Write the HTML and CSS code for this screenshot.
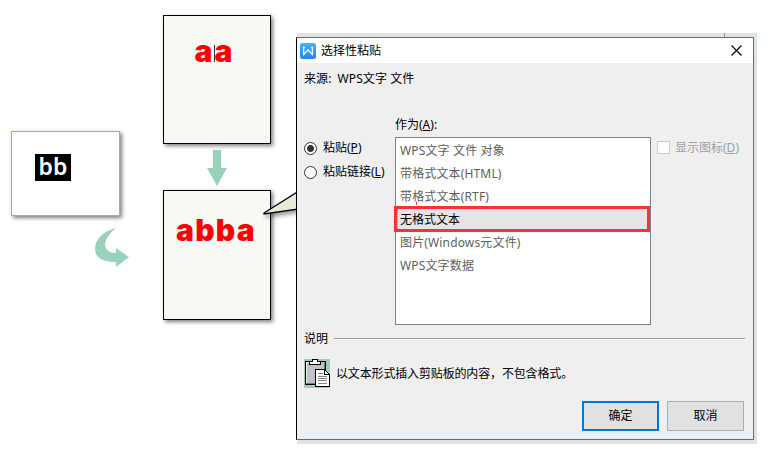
FILE: index.html
```
<!DOCTYPE html>
<html lang="zh-CN">
<head>
<meta charset="utf-8">
<title>选择性粘贴</title>
<link rel="stylesheet" href="styles.css">
</head>
<body>
<main class="canvas">
  <section class="page clip"><span class="selected-text">bb</span></section>
  <section class="page doc before"><span class="red">a</span><i class="caret"></i><span class="red">a</span></section>
  <section class="page doc after"><span class="red wide">abba</span></section>
  <svg class="arrow-down" width="20" height="36" viewBox="0 0 20 36"><path d="M6 0h8v18h6L10 36 0 18h6z" fill="#98d2ba"/></svg>
  <svg class="arrow-curve" width="34" height="40" viewBox="0 0 34 40"><path d="M21 0C8 3 0 12 0 21c0 9 8 13 21 13v5l13-10-13-9v5C7 25 6 12 21 0z" fill="#98d2ba"/></svg>
  <svg class="callout" width="40" height="28" viewBox="0 0 40 28"><path d="M3 24 L38 2 V20 L3 25z" fill="#ece9d8" stroke="#000" stroke-width="1.3"/></svg>
  <div class="backdrop"></div>
  <section class="dialog">
    <header class="titlebar">
      <svg class="logo" width="16" height="16" viewBox="0 0 16 16"><defs><linearGradient id="g" x2="0" y2="1"><stop stop-color="#3fb5ff"/><stop offset="1" stop-color="#2684f4"/></linearGradient></defs><rect width="16" height="16" rx="2.5" fill="url(#g)"/><path d="M3 4.300h1.800M3.700 4.500v7.100L8 7l4.300 4.600V4.500M11.200 4.300H13" fill="none" stroke="#fff" stroke-width="1.2"/></svg>
      <h1>选择性粘贴</h1>
      <svg class="close" width="11" height="11" viewBox="0 0 11 11"><path d="M.5.5l10 10m0-10l-10 10" stroke="#000" stroke-width="1.15"/></svg>
    </header>
    <div class="source"><span>来源:</span><span>WPS文字 文件</span></div>
    <div class="options">
      <div class="radios">
        <div class="radio"><i class="dot on"></i><span>粘贴(<u>P</u>)</span></div>
        <div class="radio"><i class="dot"></i><span>粘贴链接(<u>L</u>)</span></div>
      </div>
      <div class="formats">
        <div class="caption">作为(<u>A</u>):</div>
        <ul class="list">
          <li>WPS文字 文件 对象</li>
          <li>带格式文本(HTML)</li>
          <li class="tick">带格式文本(RTF)</li>
          <li class="chosen">无格式文本</li>
          <li>图片(Windows元文件)</li>
          <li>WPS文字数据</li>
        </ul>
      </div>
      <div class="show-icon"><i class="box"></i><span>显示图标(<u>D</u>)</span></div>
    </div>
    <div class="legend"><span>说明</span><hr></div>
    <div class="description">
      <svg width="26" height="29" viewBox="0 0 26 29" shape-rendering="crispEdges"><rect width="26" height="29" fill="#a2ceb0"/><path d="M1 2h20v23H1z" fill="#c4c0c8" stroke="#000"/><path d="M20.500 3v8M2 24.500h10" stroke="#777"/><path d="M2 3.500h4M2.500 3v21" stroke="#eee"/><path d="M5.500 5.500v-3h3v-2h5v2h3v3z" fill="#fff" stroke="#000"/><path d="M11.500 10.500h9l5 5v12h-14z" fill="#fff" stroke="#000"/><path d="M20.500 10.500v5h5" fill="none" stroke="#000"/><path d="M14 14.500h5M14 17.500h9M14 19.500h9M14 21.500h9M14 24.500h9" stroke="#85858c"/></svg>
      <span>以文本形式插入剪贴板的内容，不包含格式。</span>
    </div>
    <footer class="buttons"><button class="primary">确定</button><button>取消</button></footer>
  </section>
</main>
</body>
</html>
```
FILE: styles.css
```
* { box-sizing: border-box; }
body { margin: 0; background: #fff; }
.canvas {
  position: relative;
  width: 774px;
  height: 453px;
  overflow: hidden;
  font: 12px/16px "Noto Sans", "Noto Sans CJK SC", sans-serif;
  color: #000;
}
.canvas > * { position: absolute; }

.page { display: flex; justify-content: center; box-shadow: 2px 2px 4px rgba(0, 0, 0, .5); }
.clip { left: 11px; top: 131px; width: 109px; height: 85px; border: 1px solid #b498d8; background: #fff; justify-content: flex-start; padding: 22px 0 0 23px; }
.selected-text { width: 36px; height: 27px; background: #000; color: #fff; font: 600 23px/24px "Noto Sans", sans-serif; text-align: center; }
.doc { left: 163px; width: 108px; border: 1px solid #000; background: #f8f9f5; }
.before { top: 15px; height: 129px; padding: 21px 6px 0 0; }
.after { top: 190px; height: 130px; padding-top: 25px; }
.red { color: #f00; font: 900 30px/29px Inter, sans-serif; width: 19px; }
.wide { width: 82px; letter-spacing: 1.3px; }
.caret { width: 1px; height: 17px; margin: 8px 0 0; background: #333; }
.arrow-down { left: 207px; top: 150px; }
.arrow-curve { left: 95px; top: 228px; }
.callout { left: 261px; top: 189px; filter: drop-shadow(2px 3px 2px rgba(0, 0, 0, .4)); }
.backdrop { left: 297px; top: 33px; width: 460px; height: 411px; background: linear-gradient(#999, #999) 427px 0 / 1px 4px no-repeat #e2e2e2; }

.dialog {
  left: 296px;
  top: 37px;
  width: 458px;
  height: 403px;
  background: #efefef;
  border: 1px solid #1a80d4;
  border-left-color: #000;
  display: flex;
  flex-direction: column;
}
.titlebar { height: 25px; display: flex; align-items: center; background: #fff; padding: 0 11px 0 3px; }
.titlebar h1 { margin: 0 auto 0 5px; font-size: 12px; font-weight: 400; line-height: 16px; }
.source { display: flex; gap: 6px; margin: 8px 0 0 7px; height: 16px; letter-spacing: .1px; }
.options { display: flex; margin: 30px 0 0 7px; }
.radios { width: 91px; padding-top: 23px; display: flex; flex-direction: column; gap: 8px; }
.radio { display: flex; align-items: center; gap: 6px; height: 16px; white-space: nowrap; }
.dot { width: 13px; height: 13px; border: 1px solid #333; border-radius: 50%; background: #fff; flex: none; }
.on { background: radial-gradient(circle, #333 3px, #fff 4px); }
.formats { width: 256px; }
.caption { height: 20px; }
.list { list-style: none; margin: 0; padding: 2px 0 0; height: 188px; border: 1px solid #7e8288; background: #fff; color: #606060; letter-spacing: .15px; }
.list li { height: 23px; line-height: 21px; padding-left: 4px; }
.list .chosen { height: 20px; margin: 0 3px 3px 1px; line-height: 21px; letter-spacing: 0; color: #000; background: #e5e5e5; outline: 3px solid #f43434; border-left: 1px dotted #d09040; padding-left: 2px; }
.tick { background: linear-gradient(#f43434, #f43434) 20px 16px / 1px 3px no-repeat; }
.show-icon { display: flex; gap: 5px; height: 16px; margin: 23px 0 0 6px; color: #a0a0a0; }
.box { width: 13px; height: 13px; margin-top: 1px; background: #fff; border: 1px solid #ccc; }
.legend { display: flex; align-items: flex-start; gap: 6px; margin: 6px 8px 0 7px; height: 16px; }
.legend hr { flex: 1; margin: 7px 0 0; height: 2px; border: 0; border-top: 1px solid #a0a0a0; background: #fff; }
.description { display: flex; align-items: center; gap: 6px; margin: 12px 0 0 7px; height: 29px; letter-spacing: -.15px; }
.buttons { display: flex; justify-content: flex-end; gap: 8px; margin: 13px 9px 0 0; }
.buttons button { width: 77px; height: 30px; padding: 0; background: #e1e1e1; border: 1px solid #adadad; font: inherit; color: #000; }
.buttons .primary { border: 2px solid #0078d7; }
```
